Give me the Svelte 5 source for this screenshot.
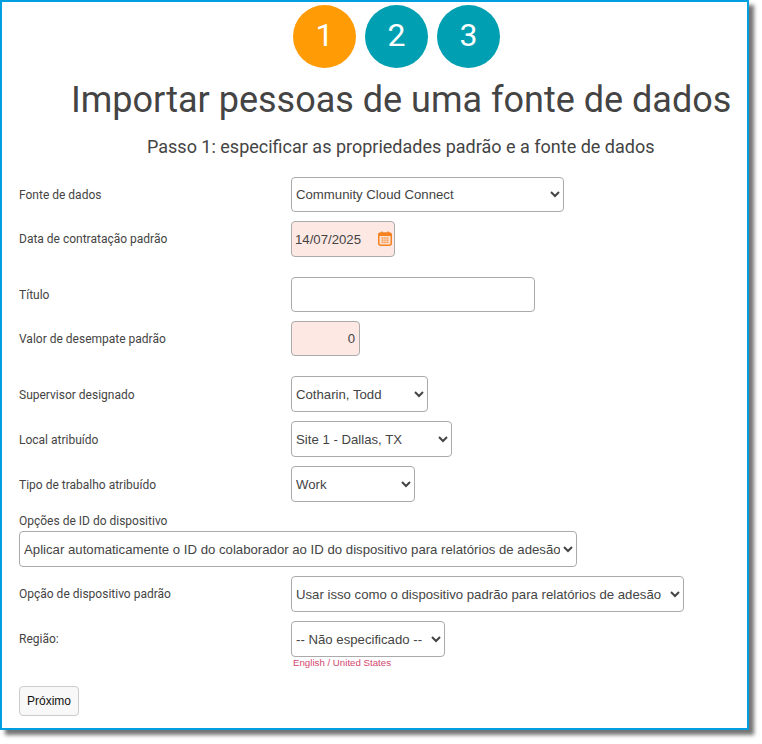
<script>
  const steps = [1, 2, 3];
  const rowsTop = [
    { label: "Supervisor designado", value: "Cotharin, Todd", cls: "w-super" },
    { label: "Local atribuído", value: "Site 1 - Dallas, TX", cls: "w-site" },
    { label: "Tipo de trabalho atribuído", value: "Work", cls: "w-work" }
  ];
</script>

<div class="frame">
  <div class="steps">
    {#each steps as step}
      <div class="step" class:active={step === 1}>{step}</div>
    {/each}
  </div>
  <h1>Importar pessoas de uma fonte de dados</h1>
  <h2>Passo 1: especificar as propriedades padrão e a fonte de dados</h2>

  <form>
    <div class="row">
      <label for="source">Fonte de dados</label>
      <select id="source" class="w-source"><option>Community Cloud Connect</option></select>
    </div>
    <div class="row group-end">
      <label for="hire">Data de contratação padrão</label>
      <div class="date-wrap">
        <input id="hire" class="date required" type="text" value="14/07/2025" />
        <svg class="cal" viewBox="0 0 14 15" width="14" height="15" aria-hidden="true">
          <rect x="0.75" y="2" width="12.5" height="12.2" rx="2" fill="#fde3cf" stroke="#f58220" stroke-width="1.5" />
          <rect x="0.75" y="2" width="12.5" height="3" fill="#f58220" />
          <rect x="3" y="0.5" width="1.6" height="3" fill="#f58220" />
          <rect x="9.4" y="0.5" width="1.6" height="3" fill="#f58220" />
          <path d="M3 7h8M3 9.2h8M3 11.4h8M4.6 6v6.4M7 6v6.4M9.4 6v6.4" stroke="#f9a66c" stroke-width="0.9" fill="none" />
        </svg>
      </div>
    </div>
    <div class="row">
      <label for="title">Título</label>
      <input id="title" class="title" type="text" />
    </div>
    <div class="row group-end">
      <label for="tie">Valor de desempate padrão</label>
      <input id="tie" class="tie required" type="text" value="0" />
    </div>
    {#each rowsTop as row}
      <div class="row assigned">
        <label for={row.cls}>{row.label}</label>
        <select id={row.cls} class={row.cls}><option>{row.value}</option></select>
      </div>
    {/each}
    <div class="stacked">
      <label for="device">Opções de ID do dispositivo</label>
      <select id="device" class="w-device"><option>Aplicar automaticamente o ID do colaborador ao ID do dispositivo para relatórios de adesão</option></select>
    </div>
    <div class="row">
      <label for="default">Opção de dispositivo padrão</label>
      <select id="default" class="w-default"><option>Usar isso como o dispositivo padrão para relatórios de adesão</option></select>
    </div>
    <div class="row tight">
      <label for="region">Região:</label>
      <select id="region" class="w-region"><option>-- Não especificado --</option></select>
    </div>
    <div class="locale">English / United States</div>
    <button type="button">Próximo</button>
  </form>
</div>

<style>
  :global(body) {
    margin: 0;
    min-height: 744px;
    background: #fff;
    font-family: Roboto, "Liberation Sans", sans-serif;
  }

  .frame {
    box-sizing: border-box;
    width: 749px;
    height: 730px;
    border: 2px solid #009fdf;
    padding: 3px 0 0 17px;
    box-shadow: 5px 5px 4px rgba(0, 0, 0, 0.55);
    color: #444;
  }

  .steps {
    display: flex;
    gap: 9px;
    margin-left: 274px;
  }

  .step {
    box-sizing: border-box;
    width: 63px;
    height: 63px;
    padding-bottom: 4px;
    border-radius: 50%;
    background: #009fb1;
    color: #fff;
    font-size: 32px;
    font-weight: 400;
    display: flex;
    align-items: center;
    justify-content: center;
  }

  .step.active {
    background: #ff9b05;
  }

  h1 {
    margin: 9px 0 0 52px;
    font-size: 36px;
    line-height: 46px;
    font-weight: 400;
    white-space: nowrap;
    color: #444;
  }

  h2 {
    margin: 12px 0 0 128px;
    font-size: 18px;
    line-height: 24px;
    font-weight: 400;
    white-space: nowrap;
  }

  form {
    margin-top: 18px;
  }

  .row {
    display: flex;
    align-items: center;
    min-height: 35px;
    margin-bottom: 9px;
  }

  .row.group-end {
    margin-bottom: 20px;
  }

  .row.tight {
    margin-bottom: 0;
  }

  label {
    width: 272px;
    flex: none;
    font-size: 12px;
    color: #444;
  }

  .assigned label {
    padding-top: 2px;
  }

  select,
  input {
    box-sizing: border-box;
    font-family: "Liberation Sans", Arial, sans-serif;
    font-size: 13.2px;
    color: #444;
    background-color: #fff;
    border: 1px solid #aaa;
    border-radius: 4px;
    height: 36px;
    margin: 0;
  }

  select {
    padding: 0;
  }

  input {
    padding: 0 4px;
  }

  .required {
    background-color: #fde8e4;
  }

  .date-wrap {
    position: relative;
    display: flex;
  }

  .date {
    width: 104px;
    padding-left: 3px;
  }

  .cal {
    position: absolute;
    top: 10px;
    left: 87px;
  }

  .title {
    width: 244px;
    height: 35px;
  }

  .tie {
    width: 69px;
    height: 35px;
    text-align: right;
  }

  .w-source { width: 273px; height: 35px; }
  .w-super { width: 137px; }
  .w-site { width: 161px; }
  .w-work { width: 124px; }
  .w-default { width: 393px; }
  .w-region { width: 154px; }

  .stacked {
    display: flex;
    flex-direction: column;
    margin-bottom: 9px;
  }

  .stacked label {
    width: auto;
    line-height: 15px;
    margin-top: 3px;
    margin-bottom: 2px;
  }

  .w-device {
    width: 558px;
  }

  .locale {
    margin: 0 0 17px 274px;
    font-family: "Liberation Sans", Arial, sans-serif;
    font-size: 9.7px;
    line-height: 12px;
    color: #d4486f;
  }

  button {
    box-sizing: border-box;
    width: 60px;
    height: 30px;
    padding: 0;
    font-family: "Liberation Sans", Arial, sans-serif;
    font-size: 12px;
    color: #111;
    background: #f8f8f8;
    border: 1px solid #ccc;
    border-radius: 4px;
  }
</style>
